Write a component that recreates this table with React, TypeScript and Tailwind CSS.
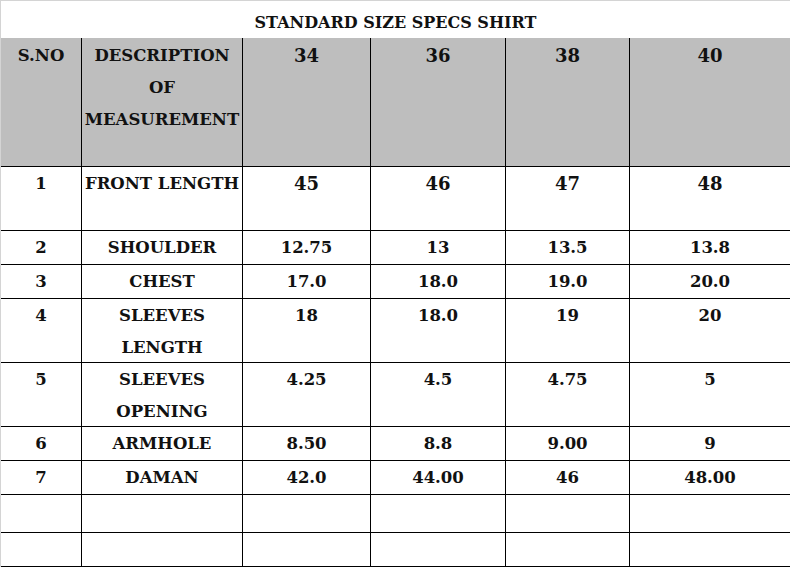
import React from "react";

const cols = "grid grid-rows-[minmax(0,1fr)] grid-cols-[81px_161px_128px_135px_124px_160px]";

type Row = { h: string; no: string; desc: string[]; vals: string[]; big?: boolean };

const rows: Row[] = [
  { h: "h-[64px]", no: "1", desc: ["FRONT LENGTH"], vals: ["45", "46", "47", "48"], big: true },
  { h: "h-[34px]", no: "2", desc: ["SHOULDER"], vals: ["12.75", "13", "13.5", "13.8"] },
  { h: "h-[34px]", no: "3", desc: ["CHEST"], vals: ["17.0", "18.0", "19.0", "20.0"] },
  { h: "h-[64px]", no: "4", desc: ["SLEEVES", "LENGTH"], vals: ["18", "18.0", "19", "20"] },
  { h: "h-[64px]", no: "5", desc: ["SLEEVES", "OPENING"], vals: ["4.25", "4.5", "4.75", "5"] },
  { h: "h-[34px]", no: "6", desc: ["ARMHOLE"], vals: ["8.50", "8.8", "9.00", "9"] },
  { h: "h-[34px]", no: "7", desc: ["DAMAN"], vals: ["42.0", "44.00", "46", "48.00"] },
];

function Cell({ children, last, className = "" }: { children?: React.ReactNode; last?: boolean; className?: string }) {
  return (
    <div
      className={`border-b border-black ${last ? "" : "border-r"} text-center leading-[32px] ${className}`}
    >
      {children}
    </div>
  );
}

export default function App() {
  return (
    <div
      className="w-[790px] h-[567px] bg-white text-[#111111] font-bold border-t border-l border-[#d4d4d4] overflow-hidden"
      style={{ fontFamily: '"DejaVu Serif", "Liberation Serif", serif' }}
    >
      <div className="h-[37px] pt-[8px] text-center text-[16px] leading-[28px]">
        STANDARD SIZE SPECS SHIRT
      </div>
      <div className={`${cols} h-[129px] bg-[#bebebe] text-[16.5px]`}>
        <Cell className="pt-[2px]">S.NO</Cell>
        <Cell className="pt-[2px]">
          <div>DESCRIPTION</div>
          <div>OF</div>
          <div>MEASUREMENT</div>
        </Cell>
        <Cell className="pt-[2px] text-[18px]">34</Cell>
        <Cell className="pt-[2px] text-[18px]">36</Cell>
        <Cell className="pt-[2px] text-[18px]">38</Cell>
        <Cell className="pt-[2px] text-[18px]" last>
          40
        </Cell>
      </div>
      {rows.map((r) => (
        <div key={r.no} className={`${cols} ${r.h} text-[16.5px]`}>
          <Cell className="pt-[1px]">{r.no}</Cell>
          <Cell className="pt-[1px]">
            {r.desc.map((d) => (
              <div key={d}>{d}</div>
            ))}
          </Cell>
          {r.vals.map((v, i) => (
            <Cell key={i} last={i === 3} className={`pt-[1px] ${r.big ? "text-[18px]" : ""}`}>
              {v}
            </Cell>
          ))}
        </div>
      ))}
      <div className={`${cols} h-[38px]`}>
        <Cell />
        <Cell />
        <Cell />
        <Cell />
        <Cell />
        <Cell last />
      </div>
      <div className={`${cols} h-[34px]`}>
        <Cell />
        <Cell />
        <Cell />
        <Cell />
        <Cell />
        <Cell last />
      </div>
    </div>
  );
}
